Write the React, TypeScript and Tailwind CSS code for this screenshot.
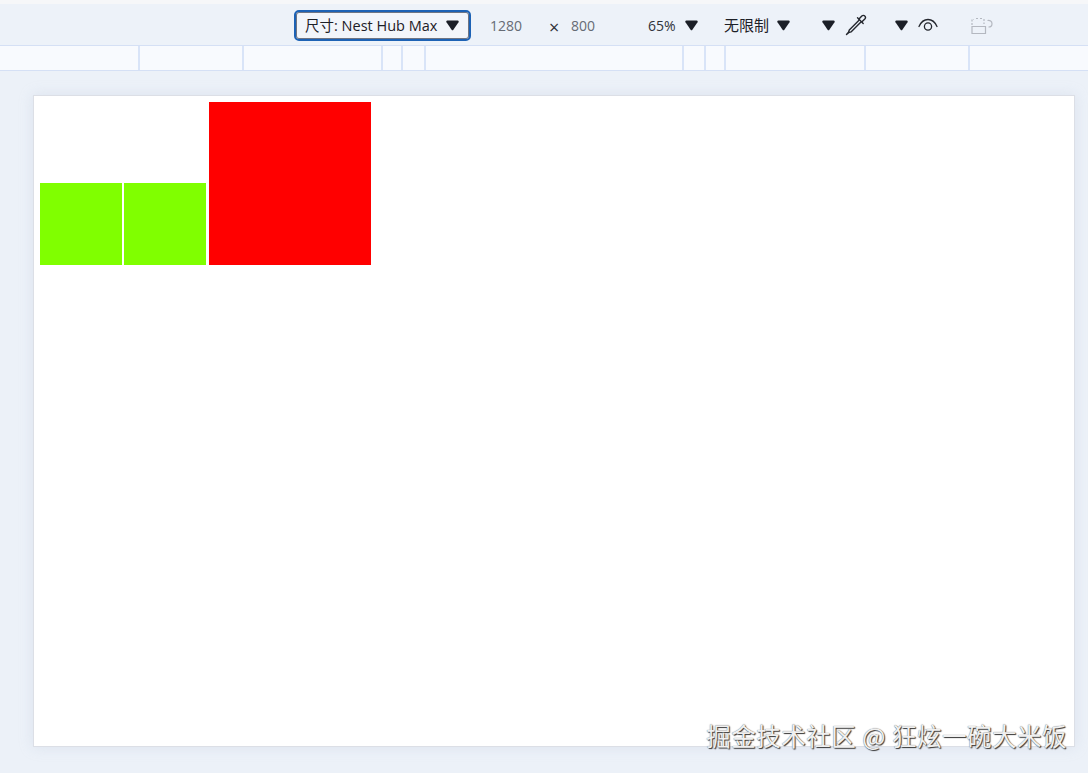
const rulerCells = [140, 104, 139, 20, 23, 258, 22, 20, 140, 104, 118]

function Caret({ className = '' }: { className?: string }) {
  return (
    <svg width="13" height="11" viewBox="0 0 13 11" className={className}>
      <path d="M1.400 .5h10.200c1 0 1.400 1 .9 1.800L7.400 9.800c-.5.700-1.300.7-1.800 0L.5 2.300C0 1.500.4.500 1.400.500z" fill="#1b1f27" />
    </svg>
  )
}

function Eyedropper() {
  return (
    <svg width="22" height="22" viewBox="0 0 22 22" fill="none" stroke="#24272e" strokeWidth="1.400" strokeLinejoin="round" strokeLinecap="round">
      <path d="M14 5l2.800-3c1-.9 2.200-.9 3 0 .8.800.8 2.100 0 3L17 7.800" />
      <path d="M12.500 3.800l5.700 5.700" />
      <path d="M14 6.300L4.300 16l-.8 2.300L1.500 20.500l2.200-1.800 2.300-.8L15.700 8.200" />
    </svg>
  )
}

function Eye() {
  return (
    <svg width="20" height="14" viewBox="0 0 20 14" fill="none" stroke="#24272e" strokeWidth="1.300" strokeLinecap="round">
      <path d="M1 8.500C3 4 6.200 1.500 10 1.500s7 2.500 9 7" />
      <circle cx="10" cy="8.500" r="3.600" />
    </svg>
  )
}

function RotateDevice() {
  return (
    <svg width="22" height="18" viewBox="0 0 22 18" fill="none" stroke="#b4b8c0" strokeWidth="1.200">
      <path d="M1 9.500h13.500v7H1z" />
      <path d="M1 8V2.500h2M5 1.500h2M9 1.500h2M13 2v5" strokeDasharray="2 1.500" />
      <path d="M16.500 3.500c2.500-.5 4.500 1 4.500 3.200 0 1.800-1.500 3.300-3.500 3.300" />
    </svg>
  )
}

export default function App() {
  return (
    <div
      className="relative flex h-[773px] w-[1088px] flex-col overflow-hidden bg-[#ecf1f8]"
      style={{ fontFamily: '"Open Sans", "Noto Sans CJK SC", sans-serif' }}
    >
      <div className="h-[4px] bg-[#f6f7f9]" />

      {/* toolbar */}
      <div className="flex h-[41px] items-center bg-[#edf2f9] pl-[294px] pt-[1px]">
        <div className="flex h-[31px] w-[177px] items-center justify-between rounded-[5px] border-[2px] border-[#1d62b5] bg-[#f2f5fa] pl-[9px] pr-[10px] shadow-[inset_0_0_0_1px_#6f7583]">
          <span className="pt-[1px] text-[14.5px] text-[#1d2027]">尺寸: Nest Hub Max</span>
          <Caret className="mt-[1px]" />
        </div>
        <span className="ml-[19px] w-[59px] text-[14px] text-[#666b75]">1280</span>
        <span className="mt-[4px] w-[22px] text-[18px] leading-none text-[#30333a]">×</span>
        <span className="w-[77px] text-[14px] text-[#666b75]">800</span>
        <span className="w-[37px] text-[14px] text-[#30333a]">65%</span>
        <Caret className="mt-[1px]" />
        <span className="ml-[26px] w-[53px] pt-[1px] text-[15px] text-[#1d2027]">无限制</span>
        <Caret className="mt-[1px]" />
        <Caret className="ml-[32px] mt-[1px]" />
        <span className="ml-[10px]">
          <Eyedropper />
        </span>
        <Caret className="ml-[28px] mt-[1px]" />
        <span className="ml-[10px]">
          <Eye />
        </span>
        <span className="ml-[33px] mt-[1px]">
          <RotateDevice />
        </span>
      </div>

      {/* media query ruler */}
      <div className="flex h-[26px] border-y border-[#d5e0f5] bg-[#f8fafe]">
        {rulerCells.map((w, i) => (
          <div key={i} style={{ width: w }} className="border-r-2 border-[#d9e4f8] last:border-r-0" />
        ))}
      </div>

      {/* viewport */}
      <div className="flex-1 pl-[33px] pt-[24px]">
        <div className="flex h-[652px] w-[1042px] items-end border border-[#dcdfe6] bg-white pb-[481px] pl-[6px] shadow-[0_0_12px_rgba(190,200,220,0.35)]">
          <div className="h-[82px] w-[82px] bg-[#80ff00]" />
          <div className="ml-[2px] h-[82px] w-[82px] bg-[#80ff00]" />
          <div className="ml-[3px] h-[163px] w-[162px] bg-[#ff0000]" />
        </div>
      </div>

      {/* watermark */}
      <div
        className="absolute bottom-[22px] right-[21px] whitespace-nowrap text-[24.5px] leading-[30px] tracking-[0.5px] text-[#f0f0f0] [text-shadow:0_0_1px_#555,1px_1px_1px_#333]"
        style={{ fontFamily: '"Noto Sans CJK SC", sans-serif' }}
      >
        掘金技术社区 @ 狂炫一碗大米饭
      </div>
    </div>
  )
}
